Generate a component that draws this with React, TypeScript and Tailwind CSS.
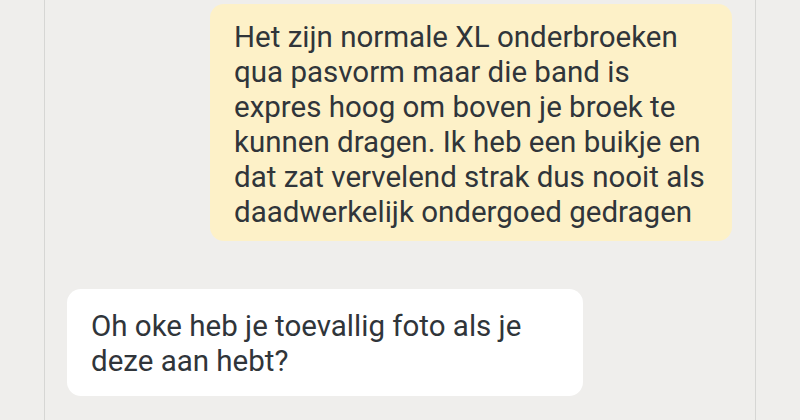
const messages = [
  {
    mine: true,
    text: 'Het zijn normale XL onderbroeken qua pasvorm maar die band is expres hoog om boven je broek te kunnen dragen. Ik heb een buikje en dat zat vervelend strak dus nooit als daadwerkelijk ondergoed gedragen',
  },
  {
    mine: false,
    text: 'Oh oke heb je toevallig foto als je deze aan hebt?',
  },
];

export default function App() {
  return (
    <div className="w-[800px] h-[420px] overflow-hidden bg-[#efeeec] font-['Roboto',sans-serif]">
      <div className="ml-[44px] w-[712px] h-full border-x border-[#d6d6d4] flex flex-col gap-[48px] pt-[4px]">
        {messages.map((m, i) =>
          m.mine ? (
            <div key={i} className="flex justify-end pr-[23px]">
              <div className="w-[522px] rounded-[14px] bg-[#fdf1c8] pl-[24px] pr-[18px] pt-[16px] pb-[11px] text-[29.5px] leading-[35px] text-[#30353a]">
                {m.text}
              </div>
            </div>
          ) : (
            <div key={i} className="flex justify-start pl-[22px]">
              <div className="w-[516px] rounded-[14px] bg-white pl-[24px] pr-[18px] pt-[20px] pb-[17px] text-[29.5px] leading-[35px] text-[#30353a]">
                {m.text}
              </div>
            </div>
          )
        )}
      </div>
    </div>
  );
}
